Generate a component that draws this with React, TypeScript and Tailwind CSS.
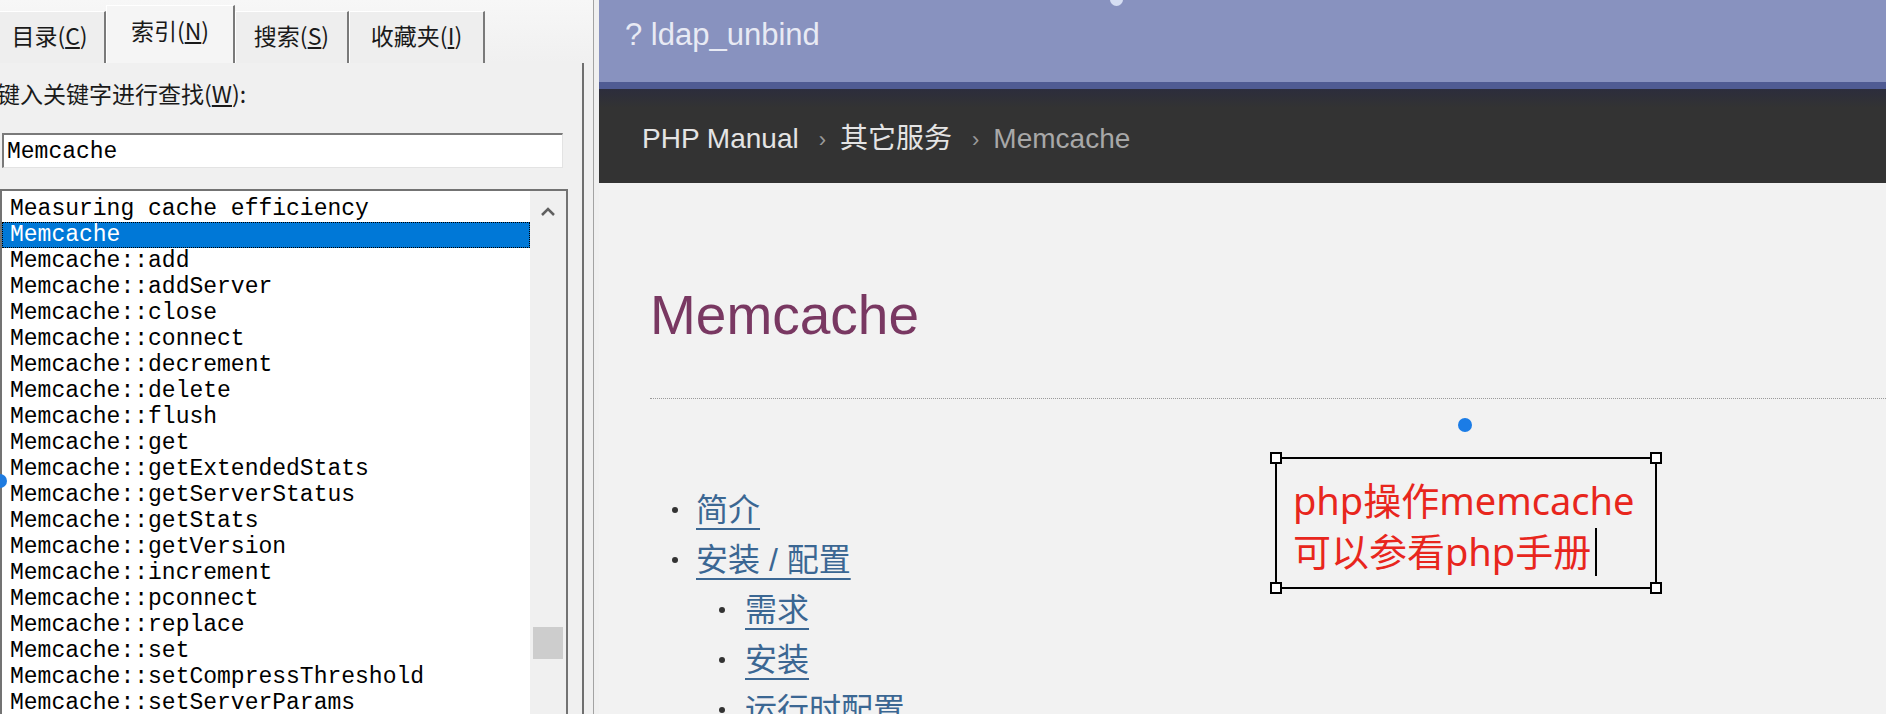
import React from 'react';

const indexItems: string[] = [
  'Measuring cache efficiency',
  'Memcache',
  'Memcache::add',
  'Memcache::addServer',
  'Memcache::close',
  'Memcache::connect',
  'Memcache::decrement',
  'Memcache::delete',
  'Memcache::flush',
  'Memcache::get',
  'Memcache::getExtendedStats',
  'Memcache::getServerStatus',
  'Memcache::getStats',
  'Memcache::getVersion',
  'Memcache::increment',
  'Memcache::pconnect',
  'Memcache::replace',
  'Memcache::set',
  'Memcache::setCompressThreshold',
  'Memcache::setServerParams',
];

const Tab: React.FC<{ label: string; hotkey: string; active?: boolean; className?: string }> = ({
  label,
  hotkey,
  active,
  className,
}) => (
  <div
    className={`flex shrink-0 items-center justify-center border-l border-t border-r-2 border-l-white border-t-white border-r-[#7a7a7a] ${
      active ? 'h-[58px] bg-[#f5f5f5] pb-[8px]' : 'h-[52px] bg-[#eeeeee] pb-[4px]'
    } ${className ?? ''}`}
  >
    <span className="text-[23px] text-[#1a1a1a]">
      {label}(<u className="underline-offset-2">{hotkey}</u>)
    </span>
  </div>
);

const Bullet: React.FC<{ text: string; sub?: boolean }> = ({ text, sub }) => (
  <li className={`flex h-[50px] items-center ${sub ? 'pl-[69px]' : 'pl-[22px]'}`}>
    <span className="h-[6px] w-[6px] shrink-0 rounded-full bg-[#333]" />
    <a
      href="#"
      className={`${sub ? 'ml-[20px]' : 'ml-[18px]'} text-[#3b6793] underline decoration-2 underline-offset-[7px]`}
    >
      {text}
    </a>
  </li>
);

const App: React.FC = () => {
  return (
    <div className="relative flex h-[714px] w-[1886px] overflow-hidden bg-[#f2f2f2] font-['Liberation_Sans','Noto_Sans_CJK_SC',sans-serif]">
      {/* left: help viewer index pane */}
      <div className="flex h-full w-[599px] shrink-0 bg-[#f0f0f0] font-['Noto_Sans_CJK_SC',sans-serif]">
        <div className="flex h-full w-[593px] flex-col overflow-hidden">
          <div className="flex h-[63px] shrink-0 items-end bg-gradient-to-b from-[#f7f7f7] to-[#f0f0f0]">
            <Tab label="目录" hotkey="C" className="-ml-[6px] w-[112px]" />
            <Tab label="索引" hotkey="N" active className="w-[129px]" />
            <Tab label="搜索" hotkey="S" className="w-[114px]" />
            <Tab label="收藏夹" hotkey="I" className="w-[136px]" />
          </div>

          <div className="flex min-h-0 w-[584px] flex-1 flex-col border-r-2 border-[#6f6f6f] bg-[#f0f0f0]">
            <div className="-ml-[3px] mt-[14px] h-[32px] shrink-0 whitespace-nowrap text-[23px] leading-[32px] text-[#1a1a1a]">
              键入关键字进行查找(<u className="underline-offset-2">W</u>):
            </div>

            <div className="ml-[2px] mt-[24px] flex h-[35px] w-[561px] shrink-0 items-center border-l-2 border-t-2 border-b border-r border-l-[#7a7a7a] border-t-[#7a7a7a] border-b-[#e3e3e3] border-r-[#e3e3e3] bg-white pl-[3px] pt-[3px] font-['Liberation_Mono',monospace] text-[23px] text-black">
              Memcache
            </div>

            <div className="mt-[21px] flex min-h-0 w-[568px] flex-1 border-l-2 border-t-2 border-r-2 border-[#737373] bg-white">
              <ul className="flex-1 pt-[5px] font-['Liberation_Mono',monospace] text-[23px] text-black">
                {indexItems.map((item, i) =>
                  i === 1 ? (
                    <li
                      key={item}
                      className="flex h-[26px] items-center border border-dotted border-black bg-[#0078d7] pl-[7px] text-white"
                    >
                      {item}
                    </li>
                  ) : (
                    <li key={item} className="flex h-[26px] items-center whitespace-pre pl-[8px]">
                      {item}
                    </li>
                  )
                )}
              </ul>
              <div className="flex w-[36px] flex-col items-center bg-[#f0f0f0]">
                <div className="flex h-[42px] shrink-0 items-center justify-center">
                  <svg width="16" height="10" viewBox="0 0 16 10">
                    <path d="M2 8 L8 2 L14 8" fill="none" stroke="#606060" strokeWidth="2.5" />
                  </svg>
                </div>
                <div className="mt-[394px] h-[32px] w-[30px] shrink-0 bg-[#cdcdcd]" />
              </div>
            </div>
          </div>
        </div>
        <div className="h-full w-px bg-[#a3a3a3]" />
      </div>

      {/* right: manual page */}
      <div className="flex h-full flex-1 flex-col overflow-hidden">
        <div className="h-[82px] shrink-0 bg-[#8892bf] pl-[26px] pt-[17px] text-[31px] leading-[36px] text-[#e8eaf4]">
          ? ldap_unbind
        </div>
        <div className="h-[7px] shrink-0 bg-[#4f5b93]" />
        <div className="flex h-[94px] shrink-0 items-center bg-gradient-to-b from-[#2c2d3c] via-[#333333] via-20% to-[#333333] pl-[43px] pt-[6px] text-[28px]">
          <span className="text-[#e4e4e4]">PHP Manual</span>
          <span className="ml-[20px] mr-[14px] text-[22px] text-[#9a9a9a]">›</span>
          <span className="text-[#e4e4e4]">其它服务</span>
          <span className="ml-[20px] mr-[14px] text-[22px] text-[#9a9a9a]">›</span>
          <span className="text-[#a8a8a8]">Memcache</span>
        </div>

        <div className="shrink-0 pl-[51px]">
          <h1 className="mt-[100px] h-[64px] text-[55px] leading-[64px] text-[#793862]">Memcache</h1>
          <div className="mt-[51px] border-t border-dotted border-[#9a9a9a]" />
          <ul className="mt-[86px] text-[32px] leading-[50px]">
            <Bullet text="简介" />
            <Bullet text="安装 / 配置" />
            <Bullet text="需求" sub />
            <Bullet text="安装" sub />
            <Bullet text="运行时配置" sub />
          </ul>
        </div>
      </div>

      {/* partial handles from other shapes */}
      <div className="absolute left-[1110px] top-[-7px] h-[13px] w-[13px] rounded-full bg-[#d6def2]" />
      <div className="absolute left-[-7px] top-[474px] h-[14px] w-[14px] rounded-full bg-[#1e7be0]" />

      {/* annotation text box */}
      <div className="absolute left-[1458px] top-[418px] h-[14px] w-[14px] rounded-full bg-[#1b7ce6]" />
      <div className="absolute left-[1275px] top-[457px] h-[132px] w-[382px] border-2 border-black pl-[16px] pt-[16px] font-['Noto_Sans','Noto_Sans_CJK_SC',sans-serif] text-[38px] leading-[51px] text-[#e8261d]">
        <div className="whitespace-nowrap">php操作memcache</div>
        <div className="flex items-center whitespace-nowrap">
          可以参看php手册
          <span className="ml-[4px] h-[48px] w-[2px] bg-black" />
        </div>
        <span className="absolute -left-[7px] -top-[7px] h-[12px] w-[12px] border-2 border-black bg-white" />
        <span className="absolute -right-[7px] -top-[7px] h-[12px] w-[12px] border-2 border-black bg-white" />
        <span className="absolute -bottom-[7px] -left-[7px] h-[12px] w-[12px] border-2 border-black bg-white" />
        <span className="absolute -bottom-[7px] -right-[7px] h-[12px] w-[12px] border-2 border-black bg-white" />
      </div>
    </div>
  );
};

export default App;
